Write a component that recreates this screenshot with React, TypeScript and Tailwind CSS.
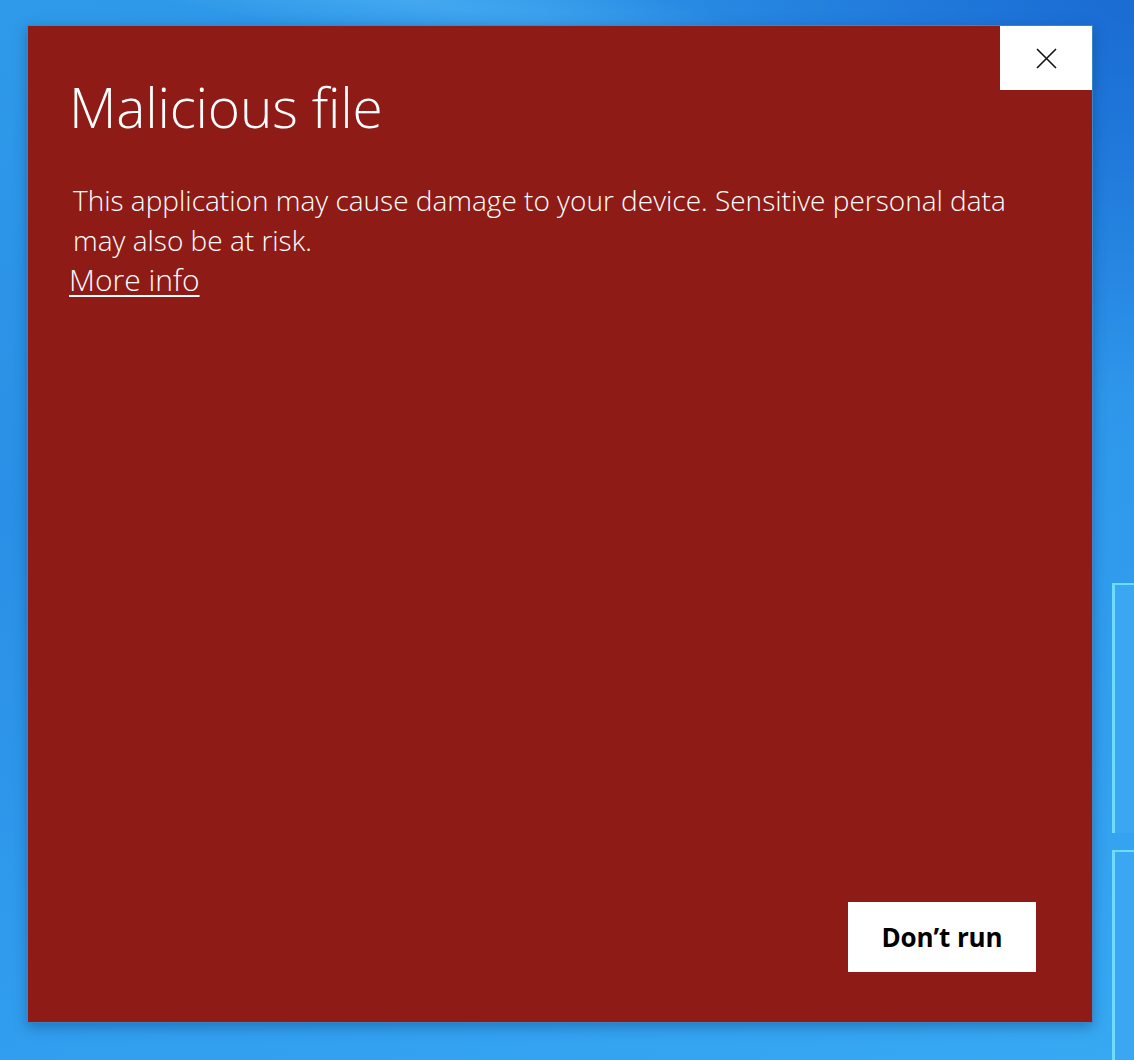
import React from "react";

export default function App() {
  return (
    <div className="relative w-[1134px] h-[1060px] overflow-hidden bg-[linear-gradient(160deg,#2f9ae9_0%,#2a8fe6_35%,#2f99ec_60%,#37a9f3_100%)]" style={{ fontFamily: '"Open Sans", "Noto Sans", sans-serif' }}>
      {/* wallpaper glows */}
      <div className="absolute right-0 top-0 w-[600px] h-[400px] bg-[radial-gradient(ellipse_at_top_right,#1a6bd3_0%,rgba(26,107,211,0)_70%)]" />
      <div className="absolute left-[60px] top-[-40px] w-[700px] h-[80px] rotate-[6deg] bg-[radial-gradient(ellipse,rgba(110,200,255,0.35)_0%,rgba(110,200,255,0)_70%)]" />
      {/* windows logo panes */}
      <div className="absolute left-[1112px] top-[583px] w-[60px] h-[250px] border-l-[3px] border-t-[2px] border-[#6fdcff] bg-[#3ba6f1]" />
      <div className="absolute left-[1112px] top-[850px] w-[60px] h-[250px] border-l-[3px] border-t-[2px] border-[#6fdcff] bg-[#3ba6f1]" />

      {/* dialog */}
      <div className="absolute left-[27px] top-[25px] w-[1066px] h-[998px] border border-[#3b86c4] shadow-[0_4px_12px_rgba(0,40,90,0.35)] bg-[#8f1b17] flex flex-col">
        <div className="flex justify-end">
          <button className="w-[92px] h-[64px] bg-white flex items-center justify-center">
            <svg width="21" height="21" viewBox="0 0 21 21">
              <path d="M1 1 L20 20 M20 1 L1 20" stroke="#111" strokeWidth="1.6" fill="none" />
            </svg>
          </button>
        </div>
        <div className="flex flex-col px-[41px] mt-[-18px]">
          <h1 className="text-white text-[55px] leading-[70px] font-light tracking-[-0.2px]">Malicious file</h1>
          <p className="text-white text-[28px] leading-[40px] font-light mt-[38px] pl-[4px] pr-[16px] tracking-[0px]">
            This application may cause damage to your device. Sensitive personal data may also be at risk.
          </p>
          <a className="text-white text-[30px] leading-[40px] font-light underline underline-offset-[4px] decoration-[2px] self-start">More info</a>
        </div>
        <div className="flex-1" />
        <div className="flex justify-end pr-[56px] pb-[50px]">
          <button className="w-[188px] h-[70px] bg-white text-black text-[26px] font-bold tracking-[-0.1px]">Don’t run</button>
        </div>
      </div>
    </div>
  );
}
